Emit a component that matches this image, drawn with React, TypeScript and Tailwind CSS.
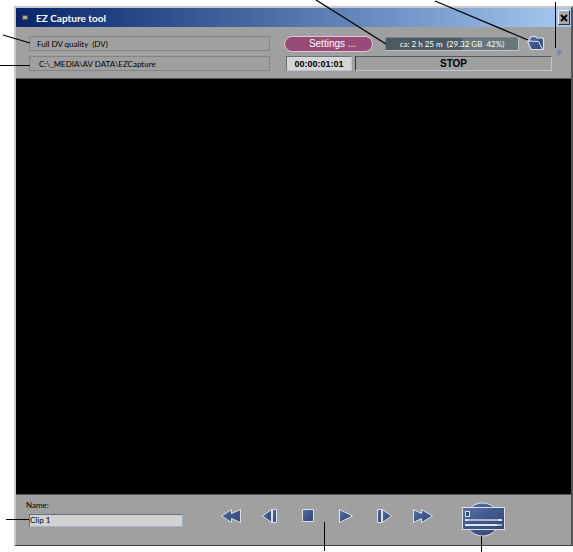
import React from 'react';

const blue = 'url(#steel)';
const edge = '#dde1ea';

const transport = [
  { label: 'Rewind', width: 20, points: ['10.5,0.5 10.5,4.5 19.5,0.5 19.5,13.5 10.5,9.5 10.5,13.5 0.5,7'] },
  { label: 'Step back', width: 15, points: ['9.5,0.5 9.5,13.5 0.5,7', '10.5,0.5 14.5,0.5 14.5,13.5 10.5,13.5'] },
  { label: 'Stop', width: 12, points: ['0.5,0.5 11.5,0.5 11.5,12.5 0.5,12.5'] },
  { label: 'Play', width: 14, points: ['0.5,0.5 0.5,13.5 13.5,7'] },
  { label: 'Step forward', width: 15, points: ['0.5,0.5 4.5,0.5 4.5,13.5 0.5,13.5', '5.5,0.5 5.5,13.5 14.5,7'] },
  { label: 'Fast forward', width: 20, points: ['8.5,0.5 8.5,4.5 0.5,0.5 0.5,13.5 8.5,9.5 8.5,13.5 19.5,7'] },
];

const TitleBar: React.FC = () => (
  <header className="flex h-[19px] items-center bg-linear-to-r from-[#0a246a] to-[#a6caf0] pr-px pl-[6px]">
    <span className="h-[5px] w-[6px] shrink-0 border border-[#4b5064] bg-[#b5ad87]"></span>
    <h1 className="ml-2 flex-1 text-[10px] leading-3 font-bold text-white">EZ Capture tool</h1>
    <button aria-label="Close" className="flex h-[15px] w-3 items-center justify-center border border-t-[#eeeeee] border-r-[#303030] border-b-[#303030] border-l-[#eeeeee] bg-[#aaaaaa]">
      <svg width="8" height="8" viewBox="0 0 8 8" className="shrink-0">
        <path d="M1 1 L7 7 M7 1 L1 7" stroke="#000" strokeWidth="1.8" />
      </svg>
    </button>
  </header>
);

const Toolbar: React.FC = () => (
  <div className="flex h-[52px] items-start border-b border-[#555555] pt-[9px] pr-2 pl-[13px]">
    <div className="flex flex-1 flex-col gap-[5px]">
      <div className="h-[15px] border border-[#858585] pl-[7px] text-[8px] leading-[14px] whitespace-pre">Full DV quality  (DV)</div>
      <div className="h-[15px] border border-[#858585] pl-[9px] text-[8px] leading-[14px]">C:\_MEDIA\AV DATA\EZCapture</div>
    </div>

    <div className="ml-[14px] flex w-[268px] flex-col gap-[5px]">
      <div className="flex h-[15px] items-center pr-[7px]">
        <button className="h-4 w-[89px] shrink-0 rounded-full border border-[#dcc9d4] bg-[#984b76] pl-2 font-['Liberation_Sans',Arial,sans-serif] text-[10px] leading-3 text-white">Settings ...</button>
        <div className="ml-3 h-[14px] flex-1 border border-t-[#7b8688] border-r-[#bac5c8] border-b-[#bac5c8] border-l-[#7b8688] bg-linear-to-r from-[#4c5a61] from-58% to-[#68787a] to-58% text-center text-[8px] leading-3 whitespace-pre text-white">ca: 2 h 25 m  (29.32 GB  42%)</div>
        <button aria-label="Open folder" className="ml-2 shrink-0">
          <svg width="18" height="15" viewBox="0 0 18 15" className="block">
            <path d="M2.5 5 L2.5 2.5 L4.5 0.5 L8.5 0.5 L10 2 L15.5 2 L16.5 3 L16.5 13.5 L4 13.5 L0.5 5 Z" fill={blue} stroke={edge} strokeWidth="1.2" />
            <path d="M0.5 5 L11.5 5.5 L15.5 13.5" fill="none" stroke={edge} strokeWidth="1" />
          </svg>
        </button>
      </div>
      <div className="flex h-[15px] gap-[3px] pl-0.5 font-['Liberation_Sans',Arial,sans-serif] font-bold">
        <div className="w-[66px] border border-t-[#66717a] border-r-[#b9c2d0] border-b-[#b9c2d0] border-l-[#66717a] bg-[#d5d5d5] text-center text-[9px] leading-[14px]">00:00:01:01</div>
        <div className="flex-1 border border-t-[#505861] border-r-[#bec5d0] border-b-[#bec5d0] border-l-[#303840] text-center text-[10px] leading-[14px]">STOP</div>
      </div>
    </div>

    <button aria-label="Expand" className="mt-3 ml-[5px]">
      <svg width="6" height="9" viewBox="0 0 6 9" className="block">
        <path d="M0.5 0.5 L5.5 4.5 L0.5 8.5 Z" fill="#7484b5" stroke="#8c96b4" />
      </svg>
    </button>
  </div>
);

const ControlBar: React.FC = () => (
  <div className="flex h-[51px] items-start border-t border-[#555555]">
    <div className="flex w-[167px] flex-col pt-[5px] pl-[10px] text-[8px]">
      <label htmlFor="clip" className="leading-[10px]">Name:</label>
      <input id="clip" defaultValue="Clip 1" className="mt-[4px] ml-[3px] h-[13px] border border-t-[#66717a] border-r-[#a5b4c8] border-b-[#a5b4c8] border-l-[#66717a] bg-[#d2d2d2] pb-px text-[8px] leading-[10px] outline-none" />
    </div>

    <div className="ml-[38px] flex w-[212px] justify-between pt-[14px]">
      {transport.map((item) => (
        <button key={item.label} aria-label={item.label} className="flex w-5 justify-center">
          <svg width={item.width} height="14" viewBox={`0 0 ${item.width} 14`} className="block shrink-0">
            {item.points.map((points) => (
              <polygon key={points} points={points} fill={blue} stroke={edge} strokeLinejoin="round" />
            ))}
          </svg>
        </button>
      ))}
    </div>

    <button aria-label="Capture" className="mt-[7px] ml-[29px]">
      <svg width="44" height="35" viewBox="0 0 44 35" className="block">
        <ellipse cx="20.5" cy="17.5" rx="17" ry="16.5" fill={blue} stroke={edge} />
        <rect x="0.5" y="5.5" width="42" height="22" fill={blue} stroke={edge} />
        <rect x="3.5" y="9.5" width="4" height="5" fill="#354b7c" stroke="#dde1ea" />
        <path d="M3 18 H40 M3 23 H40" stroke="#adb8d4" strokeWidth="2" />
        <path d="M3 18 H6 M36 18 H40 M3 23 H35" stroke="#e2e6ee" strokeWidth="2" />
      </svg>
    </button>
  </div>
);

const App: React.FC = () => {
  return (
    <div className="relative flex min-h-screen flex-col bg-white pt-[6px] pb-[6px] pl-[14px] font-[Lato,'Liberation_Sans',Arial,sans-serif] text-black">
      {/* Shared gradient for the icons */}
      <svg width="0" height="0" className="absolute">
        <defs>
          <linearGradient id="steel" x1="0" y1="0" x2="1" y2="1">
            <stop offset="0" stopColor="#5874b0" />
            <stop offset="0.45" stopColor="#42598f" />
            <stop offset="1" stopColor="#344873" />
          </linearGradient>
        </defs>
      </svg>

      <main className="flex flex-1 flex-col border-t-2 border-r-2 border-b border-l-2 border-t-[#c9c9c9] border-r-[#555555] border-b-[#404040] border-l-[#c9c9c9] bg-[#a0a0a0]">
        <TitleBar />
        <Toolbar />
        <div className="flex-1 bg-black"></div>
        <ControlBar />
      </main>

      {/* Callout lines */}
      <svg width="573" height="552" viewBox="0 0 573 552" className="pointer-events-none absolute top-0 left-0">
        <g stroke="#000" strokeWidth="1" fill="none">
          <path d="M3 35 L30 43" strokeWidth="1.3" />
          <path d="M0 65.5 H30" />
          <path d="M316 0 L386 44" strokeWidth="1.3" />
          <path d="M435 1 L528 40" strokeWidth="1.3" />
          <path d="M555.5 2 V48" />
          <path d="M6 519.5 H29" />
          <path d="M324.5 522 V551" />
          <path d="M481.5 536 V552" />
        </g>
      </svg>
    </div>
  );
};

export default App;
